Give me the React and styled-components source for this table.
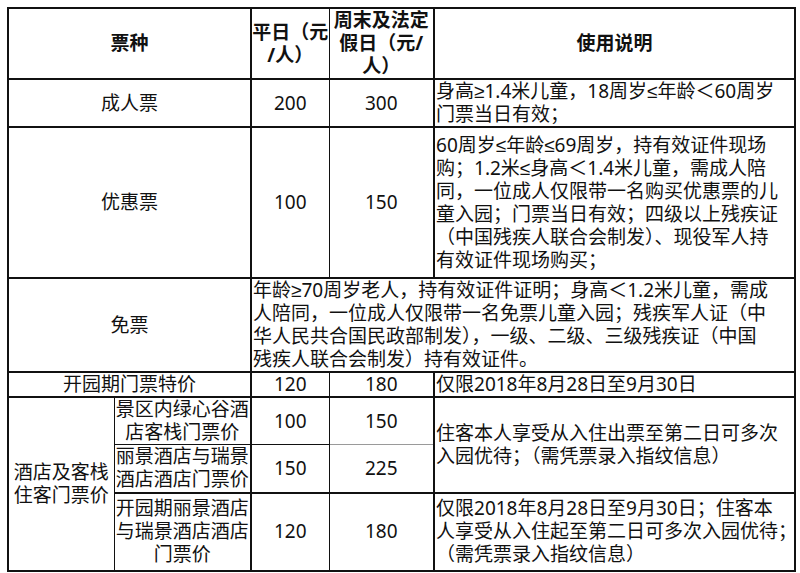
import React from "react";
import styled, { createGlobalStyle } from "styled-components";

const GlobalStyle = createGlobalStyle`
  html, body { margin: 0; padding: 0; background: #ffffff; }
`;

const Page = styled.div`
  padding: 7px 6px 0 7px;
  font-family: "Noto Sans", "Liberation Sans", "Noto Sans CJK SC", sans-serif;
  color: #111111;
`;

const Table = styled.table`
  border-collapse: collapse;
  table-layout: fixed;
  width: 787px;
  border: 2px solid #111111;
  font-size: 19px;
  line-height: 23px;
`;

const Row = styled.tr`
  height: ${(p) => p.$h}px;
  ${(p) => (p.$heavy ? "border-top: 2px solid #111111;" : "")}
`;

const HeadCell = styled.th`
  font-weight: 700;
  text-align: center;
  vertical-align: middle;
  padding: 0;
  border: 1px solid #111111;
  border-left-width: ${(p) => (p.$heavyLeft ? "2px" : "1px")};
`;

const Cell = styled.td`
  text-align: ${(p) => (p.$left ? "left" : "center")};
  vertical-align: middle;
  padding: 0 ${(p) => (p.$left ? "1px" : "0")};
  border: 1px solid #111111;
  border-left-width: ${(p) => (p.$heavyLeft ? "2px" : "1px")};
  ${(p) => (p.$softBottom ? "border-bottom-color: #9a9a9a;" : "")}
  overflow: visible;
`;

const Line = styled.span`
  display: block;
  white-space: nowrap;
`;

const Lines = ({ items }) =>
  items.map((t, i) => <Line key={i}>{t}</Line>);

export default function App() {
  return (
    <Page>
      <GlobalStyle />
      <Table>
        <colgroup>
          <col style={{ width: 106 }} />
          <col style={{ width: 137 }} />
          <col style={{ width: 78 }} />
          <col style={{ width: 105 }} />
          <col style={{ width: 361 }} />
        </colgroup>
        <thead>
          <Row $h={70}>
            <HeadCell colSpan={2}>票种</HeadCell>
            <HeadCell $heavyLeft>
              <Lines items={["平日（元", "/人）"]} />
            </HeadCell>
            <HeadCell>
              <Lines items={["周末及法定", "假日（元/", "人）"]} />
            </HeadCell>
            <HeadCell $heavyLeft>使用说明</HeadCell>
          </Row>
        </thead>
        <tbody>
          <Row $h={46} $heavy>
            <Cell colSpan={2}>成人票</Cell>
            <Cell $heavyLeft>200</Cell>
            <Cell>300</Cell>
            <Cell $left $heavyLeft>
              <Lines items={["身高≥1.4米儿童，18周岁≤年龄＜60周岁", "门票当日有效；"]} />
            </Cell>
          </Row>
          <Row $h={151} $heavy>
            <Cell colSpan={2}>优惠票</Cell>
            <Cell $heavyLeft>100</Cell>
            <Cell>150</Cell>
            <Cell $left $heavyLeft>
              <Lines
                items={[
                  "60周岁≤年龄≤69周岁，持有效证件现场",
                  "购；1.2米≤身高＜1.4米儿童，需成人陪",
                  "同，一位成人仅限带一名购买优惠票的儿",
                  "童入园；门票当日有效；四级以上残疾证",
                  "（中国残疾人联合会制发）、现役军人持",
                  "有效证件现场购买；",
                ]}
              />
            </Cell>
          </Row>
          <Row $h={94} $heavy>
            <Cell colSpan={2}>免票</Cell>
            <Cell $left $heavyLeft colSpan={3}>
              <Lines
                items={[
                  "年龄≥70周岁老人，持有效证件证明；身高＜1.2米儿童，需成",
                  "人陪同，一位成人仅限带一名免票儿童入园；残疾军人证（中",
                  "华人民共合国民政部制发），一级、二级、三级残疾证（中国",
                  "残疾人联合会制发）持有效证件。",
                ]}
              />
            </Cell>
          </Row>
          <Row $h={25} $heavy>
            <Cell colSpan={2}>开园期门票特价</Cell>
            <Cell $heavyLeft>120</Cell>
            <Cell>180</Cell>
            <Cell $left $heavyLeft>仅限2018年8月28日至9月30日</Cell>
          </Row>
          <Row $h={47} $heavy>
            <Cell rowSpan={3}>
              <Lines items={["酒店及客栈", "住客门票价"]} />
            </Cell>
            <Cell>
              <Lines items={["景区内绿心谷酒", "店客栈门票价"]} />
            </Cell>
            <Cell $heavyLeft>100</Cell>
            <Cell $softBottom>150</Cell>
            <Cell $left $heavyLeft rowSpan={2}>
              <Lines
                items={[
                  "住客本人享受从入住出票至第二日可多次",
                  "入园优待；（需凭票录入指纹信息）",
                ]}
              />
            </Cell>
          </Row>
          <Row $h={48}>
            <Cell>
              <Lines items={["丽景酒店与瑞景", "酒店酒店门票价"]} />
            </Cell>
            <Cell $heavyLeft>150</Cell>
            <Cell>225</Cell>
          </Row>
          <Row $h={78} $heavy>
            <Cell>
              <Lines items={["开园期丽景酒店", "与瑞景酒店酒店", "门票价"]} />
            </Cell>
            <Cell $heavyLeft>120</Cell>
            <Cell>180</Cell>
            <Cell $left $heavyLeft>
              <Lines
                items={[
                  "仅限2018年8月28日至9月30日；住客本",
                  "人享受从入住起至第二日可多次入园优待；",
                  "（需凭票录入指纹信息）",
                ]}
              />
            </Cell>
          </Row>
        </tbody>
      </Table>
    </Page>
  );
}
